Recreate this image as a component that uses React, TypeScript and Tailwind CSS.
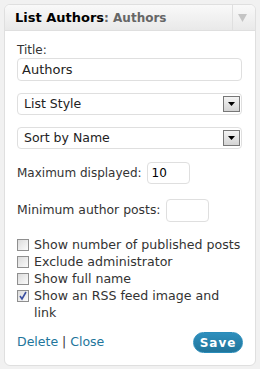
import React from "react";

const font = { fontFamily: '"DejaVu Sans", Verdana, sans-serif' };

function SelectBox({ label }: { label: string }) {
  return (
    <div className="flex h-[22px] w-[225px] items-center justify-between rounded-[4px] border border-[#dfdfdf] bg-white pl-[6px] pr-[1px]">
      <span className="text-[12.5px] text-[#222]">{label}</span>
      <span className="flex h-[16px] w-[17px] items-center justify-center border border-[#777] bg-gradient-to-b from-[#f4f4f4] to-[#d4d4d4]">
        <svg width="7" height="4" viewBox="0 0 7 4">
          <path d="M0 0h7L3.5 4z" fill="#000" />
        </svg>
      </span>
    </div>
  );
}

function Check({ label, checked }: { label: React.ReactNode; checked?: boolean }) {
  return (
    <label className="flex items-start gap-[5px] leading-[17px]">
      <span className="mt-[3px] flex h-[12px] w-[12px] shrink-0 items-center justify-center border border-[#8f8f8f] bg-gradient-to-br from-[#dcdcdc] to-[#fbfbfb]">
        {checked && (
          <svg width="10" height="10" viewBox="0 0 10 10">
            <path d="M2 5l2 3 4-7" stroke="#3b4fa0" strokeWidth="1.6" fill="none" />
          </svg>
        )}
      </span>
      <span>{label}</span>
    </label>
  );
}

export default function App() {
  return (
    <div className="h-[369px] w-[260px] bg-[#f1f1f1] pl-[4px] pt-[4px]" style={font}>
      <div className="w-[252px] overflow-hidden rounded-[6px] border border-[#dfdfdf] bg-white">
        <div className="flex h-[26px] items-stretch border-b border-[#dfdfdf] bg-gradient-to-b from-[#f9f9f9] to-[#e9e9e9]">
          <div className="flex flex-1 items-center pl-[10px] text-[13px] font-bold text-[#000]">
            List Authors<span className="text-[12px] text-[#666]">: Authors</span>
          </div>
          <div className="flex w-[23px] items-center justify-center border-l border-[#dfdfdf] pr-[3px]">
            <svg width="9" height="8" viewBox="0 0 9 8">
              <path d="M0 0h9L4.5 8z" fill="#c4c4c4" />
            </svg>
          </div>
        </div>
        <div className="px-[12px] pb-[12px] pt-[12px] text-[12px] text-[#333]">
          <div className="leading-[15px]">Title:</div>
          <div className="flex h-[23px] w-[225px] items-center rounded-[4px] border border-[#dfdfdf] pl-[4px] text-[13px] text-[#222]">
            Authors
          </div>
          <div className="mt-[12px]">
            <SelectBox label="List Style" />
          </div>
          <div className="mt-[12px]">
            <SelectBox label="Sort by Name" />
          </div>
          <div className="mt-[13px] flex items-center gap-[5px]">
            <span>Maximum displayed:</span>
            <span className="flex h-[22px] w-[43px] items-center rounded-[4px] border border-[#dfdfdf] pl-[4px] text-[#000]">10</span>
          </div>
          <div className="mt-[15px] flex items-center gap-[5px]">
            <span className="text-[12.4px]">Minimum author posts:</span>
            <span className="h-[23px] w-[43px] rounded-[4px] border border-[#dfdfdf]" />
          </div>
          <div className="mt-[14px] flex flex-col text-[12.6px]">
            <Check label="Show number of published posts" />
            <Check label="Exclude administrator" />
            <Check label="Show full name" />
            <Check label="Show an RSS feed image and link" checked />
          </div>
          <div className="mt-[11px] flex items-center justify-between">
            <div className="text-[12.5px] text-[#21759b]">
              Delete <span className="text-[#333]">|</span> Close
            </div>
            <button className="h-[21px] w-[50px] rounded-full border border-[#298cba] bg-gradient-to-b from-[#2e8fbd] to-[#21759b] text-[12px] font-bold tracking-[1px] text-white">
              Save
            </button>
          </div>
        </div>
      </div>
    </div>
  );
}
